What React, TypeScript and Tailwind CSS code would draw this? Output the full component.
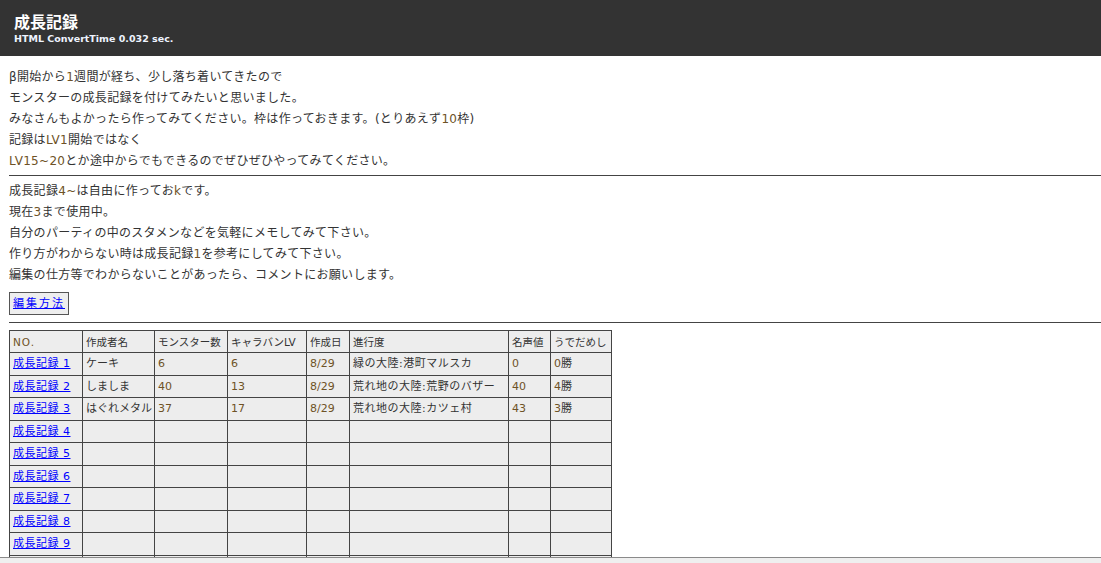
import React from 'react';

const font = { fontFamily: '"DejaVu Sans", "Noto Sans CJK JP", sans-serif' };

interface Record {
  author: string;
  monsters: string;
  caravan: string;
  date: string;
  progress: string;
  fame: string;
  trial: string;
}

const records: Record[] = [
  { author: 'ケーキ', monsters: '6', caravan: '6', date: '8/29', progress: '緑の大陸:港町マルスカ', fame: '0', trial: '0' },
  { author: 'しましま', monsters: '40', caravan: '13', date: '8/29', progress: '荒れ地の大陸:荒野のバザー', fame: '40', trial: '4' },
  { author: 'はぐれメタル', monsters: '37', caravan: '17', date: '8/29', progress: '荒れ地の大陸:カツェ村', fame: '43', trial: '3' },
];

const headers = ['NO.', '作成者名', 'モンスター数', 'キャラバンLV', '作成日', '進行度', '名声値', 'うでだめし'];
const widths = ['w-[73px]', 'w-[72px]', 'w-[73px]', 'w-[79px]', 'w-[43px]', 'w-[159px]', 'w-[42px]', 'w-[61px]'];

const Num: React.FC<{ children: React.ReactNode }> = ({ children }) => (
  <span className="text-[#6e5226]">{children}</span>
);

const cell = 'border border-[#444] bg-[#ededed] px-[3px] py-0 text-left align-middle whitespace-nowrap overflow-hidden';

export default function App() {
  const rows = Array.from({ length: 10 }, (_, i) => i);

  return (
    <div className="min-h-[563px] bg-white text-[#333]" style={font}>
      <div className="h-[56px] bg-[#333] px-[14px] pt-[13px] text-white">
        <div className="text-[16px] font-bold leading-[20px]">成長記録</div>
        <div className="text-[9.5px] font-bold leading-[12px] text-[#eef4ff]">HTML ConvertTime 0.032 sec.</div>
      </div>

      <div className="pl-[9px] pt-[11px]">
        <div className="text-[12px] leading-[21px] tracking-[0.3px]">
          <p>β開始から<Num>1</Num>週間が経ち、少し落ち着いてきたので</p>
          <p>モンスターの成長記録を付けてみたいと思いました。</p>
          <p>みなさんもよかったら作ってみてください。枠は作っておきます。(とりあえず<Num>10</Num>枠)</p>
          <p>記録は<Num>LV1</Num>開始ではなく</p>
          <p><Num>LV15~20</Num>とか途中からでもできるのでぜひぜひやってみてください。</p>
        </div>
        <div className="my-[3px] h-px bg-[#444]" />
        <div className="pt-[2px] text-[12px] leading-[21px] tracking-[0.3px]">
          <p>成長記録<Num>4~</Num>は自由に作ってお<Num>k</Num>です。</p>
          <p>現在<Num>3</Num>まで使用中。</p>
          <p>自分のパーティの中のスタメンなどを気軽にメモしてみて下さい。</p>
          <p>作り方がわからない時は成長記録<Num>1</Num>を参考にしてみて下さい。</p>
          <p>編集の仕方等でわからないことがあったら、コメントにお願いします。</p>
        </div>
        <div className="mt-[6px] flex">
          <div className="flex h-[23px] items-center border border-[#555] bg-[#eee] px-[3px]">
            <a href="#" className="text-[11px] leading-[14px] tracking-[2px] text-[#0000ff] underline">編集方法</a>
          </div>
        </div>
        <div className="mt-[7px] h-px bg-[#444]" />

        <table className="mt-[7px] w-[603px] table-fixed border-collapse text-[11px] leading-[14px]">
          <colgroup>
            {widths.map((w, i) => (
              <col key={i} className={w} />
            ))}
          </colgroup>
          <thead>
            <tr className="h-[22px]">
              {headers.map((h, i) => (
                <th key={h} className={`${cell} text-[10.5px] font-normal`}>
                  {i === 0 ? <span className="tracking-[1px] text-[#6e5226]">{h}</span> : h}
                </th>
              ))}
            </tr>
          </thead>
          <tbody>
            {rows.map((i) => {
              const r = records[i];
              return (
                <tr key={i} className={i % 2 === 0 ? 'h-[23px]' : 'h-[22px]'}>
                  <td className={cell}>
                    <a href="#" className="tracking-[0.5px] text-[#0000ff] underline">成長記録 {i + 1}</a>
                  </td>
                  <td className={cell}>{r?.author}</td>
                  <td className={cell}>{r && <Num>{r.monsters}</Num>}</td>
                  <td className={cell}>{r && <Num>{r.caravan}</Num>}</td>
                  <td className={cell}>{r && <Num>{r.date}</Num>}</td>
                  <td className={`${cell} tracking-[0.5px]`}>{r?.progress}</td>
                  <td className={cell}>{r && <Num>{r.fame}</Num>}</td>
                  <td className={cell}>{r && <><Num>{r.trial}</Num>勝</>}</td>
                </tr>
              );
            })}
          </tbody>
        </table>
      </div>

      <div className="fixed bottom-0 left-0 right-0 h-[6px] border-t border-[#8a8a8a] bg-[#efefef]" />
    </div>
  );
}
